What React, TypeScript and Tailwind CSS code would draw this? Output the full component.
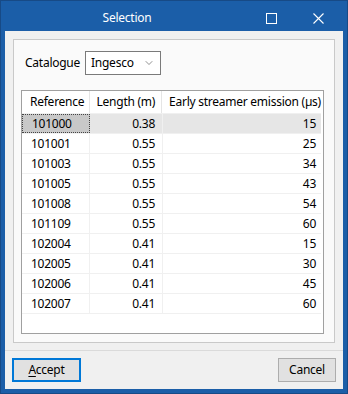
import { ChevronDown } from 'lucide-react';

const rows = [
    ['101000', '0.38', '15'],
    ['101001', '0.55', '25'],
    ['101003', '0.55', '34'],
    ['101005', '0.55', '43'],
    ['101008', '0.55', '54'],
    ['101109', '0.55', '60'],
    ['102004', '0.41', '15'],
    ['102005', '0.41', '30'],
    ['102006', '0.41', '45'],
    ['102007', '0.41', '60'],
];

export default function App() {
    return (
        <div
            className="w-[348px] h-[394px] flex flex-col bg-[#1b5ea8] border border-[#174a86] text-[12px] tracking-[-0.25px] text-black"
            style={{ fontFamily: '"Noto Sans", "Liberation Sans", sans-serif' }}
        >
            {/* Title bar */}
            <div className="h-[30px] flex items-center text-white relative">
                <div className="absolute left-0 right-0 top-[11px] text-center pr-[94px] leading-none">Selection</div>
                <div className="ml-auto mr-[6px] flex items-center h-full pt-[4px]">
                    <div className="w-[47px] h-full flex items-center justify-center">
                        <div className="w-[11px] h-[11px] border border-white" />
                    </div>
                    <div className="w-[46px] h-full flex items-center justify-center">
                        <svg width="11" height="11" viewBox="0 0 11 11" stroke="white" strokeWidth="1.1">
                            <path d="M0.5 0.5 L10.5 10.5 M10.5 0.5 L0.5 10.5" />
                        </svg>
                    </div>
                </div>
            </div>

            {/* Client area */}
            <div className="flex-1 mx-[4px] mb-[4px] bg-[#f0f0f0] flex flex-col">
                <div className="flex-1 m-[8px] mb-[7px] border border-[#c9c9c9] bg-[#fafafa] flex flex-col pl-[7px] pr-[10px] pb-[8px]">
                    <div className="flex items-center mt-[11px] ml-[4px] h-[24px]">
                        <span className="w-[60px] leading-none">Catalogue</span>
                        <div className="w-[76px] h-[24px] border border-[#7a7a7a] bg-white flex items-center pl-[5px] pr-[5px]">
                            <span className="flex-1 leading-none">Ingesco</span>
                            <ChevronDown className="w-[12px] h-[12px] text-[#555]" strokeWidth={1.3} />
                        </div>
                    </div>

                    <div className="mt-[15px] flex-1 border border-[#a0a0a0] bg-white pr-[2px]">
                        {/* Header */}
                        <div className="flex h-[23px] items-center border-b border-[#f0f0f0] whitespace-nowrap">
                            <div className="w-[68px] h-full flex items-center pl-[8px] border-r border-[#e5e5e5]">Reference</div>
                            <div className="w-[73px] h-full flex items-center pl-[7px] border-r border-[#e5e5e5]">Length (m)</div>
                            <div className="flex-1 h-full flex items-center pl-[7px]">Early streamer emission (µs)</div>
                        </div>
                        {rows.map((r, i) => (
                            <div
                                key={r[0]}
                                className={
                                    'flex h-[20px] items-center border-b border-[#f0f0f0] ' +
                                    (i === 0 ? 'bg-[#e6e6e6]' : '')
                                }
                            >
                                <div
                                    className={
                                        'w-[68px] h-full flex items-center pl-[9px] ' +
                                        (i === 0
                                            ? 'bg-[#c8c8c8] border border-dotted border-[#444] pl-[8px]'
                                            : 'border-r border-[#f0f0f0]')
                                    }
                                >
                                    {r[0]}
                                </div>
                                <div className="w-[73px] h-full flex items-center justify-end pr-[7px] border-r border-[#f0f0f0]">
                                    {r[1]}
                                </div>
                                <div className="flex-1 h-full flex items-center justify-end pr-[5px]">{r[2]}</div>
                            </div>
                        ))}
                    </div>
                </div>

                {/* Footer */}
                <div className="border-t border-[#dadada] flex items-center justify-between px-[7px] pt-[7px] pb-[7px]">
                    <button className="w-[69px] h-[24px] bg-[#e1e1e1] border-2 border-[#0078d7] leading-none">
                        <span className="underline underline-offset-2">A</span>ccept
                    </button>
                    <button className="w-[58px] h-[24px] bg-[#e1e1e1] border border-[#adadad] leading-none">
                        Cancel
                    </button>
                </div>
            </div>
        </div>
    );
}
